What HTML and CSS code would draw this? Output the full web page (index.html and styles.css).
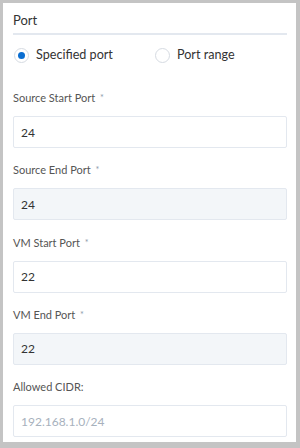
FILE: index.html
```html
<!DOCTYPE html>
<html>
<head>
<meta charset="utf-8">
<link rel="stylesheet" href="styles.css">
</head>
<body>
<div class="panel">
  <div class="title">Port</div>
  <div class="radios">
    <label class="radio"><span class="dot checked"></span>Specified port</label>
    <label class="radio"><span class="dot"></span>Port range</label>
  </div>
  <div class="field">
    <div class="label">Source Start Port <span class="req">*</span></div>
    <div class="input">24</div>
  </div>
  <div class="field">
    <div class="label">Source End Port <span class="req">*</span></div>
    <div class="input disabled">24</div>
  </div>
  <div class="field">
    <div class="label">VM Start Port <span class="req">*</span></div>
    <div class="input">22</div>
  </div>
  <div class="field">
    <div class="label">VM End Port <span class="req">*</span></div>
    <div class="input disabled">22</div>
  </div>
  <div class="field">
    <div class="label">Allowed CIDR:</div>
    <div class="input placeholder">192.168.1.0/24</div>
  </div>
</div>
</body>
</html>
```
FILE: styles.css
```css
html, body {
  margin: 0;
  padding: 0;
  background: #c4c4c4;
}
body {
  width: 300px;
  height: 448px;
  padding: 3px 4px 6px 3px;
  box-sizing: border-box;
  font-family: Lato, "Open Sans", sans-serif;
}
.panel {
  background: #fff;
  height: 439px;
  padding: 0 9px 0 10px;
  box-sizing: border-box;
}
.title {
  font-size: 13px;
  color: #333;
  line-height: 18px;
  padding-top: 8px;
  padding-bottom: 4px;
  border-bottom: 2px solid #e3e8ef;
}
.radios {
  display: flex;
  padding-top: 11px;
  height: 18px;
}
.radio {
  display: flex;
  align-items: center;
  font-size: 12.6px;
  color: #333;
  line-height: 18px;
}
.radio:first-child {
  width: 141px;
}
.dot {
  width: 13px;
  height: 13px;
  border: 1px solid #d6dbe2;
  border-radius: 50%;
  margin-left: 1px;
  margin-right: 7px;
  position: relative;
  box-sizing: content-box;
}
.dot.checked::after {
  content: "";
  position: absolute;
  left: 3px;
  top: 3px;
  width: 7px;
  height: 7px;
  border-radius: 50%;
  background: #0a6ed1;
}
.field {
  margin-top: 14.3px;
}
.radios + .field {
  margin-top: 26px;
}
.label {
  font-size: 11px;
  color: #555;
  line-height: 16px;
}
.req {
  color: #8c9aab;
  font-size: 9px;
  margin-left: 2px;
  vertical-align: 1px;
}
.input {
  margin-top: 10px;
  height: 32px;
  border: 1px solid #e3e8ef;
  border-radius: 2px;
  box-sizing: border-box;
  padding: 0 7px;
  display: flex;
  align-items: center;
  font-size: 12px;
  color: #333;
}
.input.disabled {
  background: #f3f6f9;
}
.input.placeholder {
  color: #a7b1bd;
}
```
